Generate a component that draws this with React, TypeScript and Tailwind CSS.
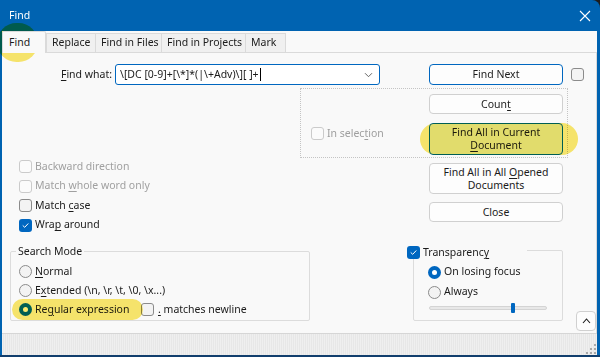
import type { ReactNode } from "react";

/* small win11-ish controls */

function U({ children }: { children: ReactNode }) {
  return <span className="underline decoration-1 underline-offset-[2px]">{children}</span>;
}

function Check({ checked = false, disabled = false }: { checked?: boolean; disabled?: boolean }) {
  if (checked) {
    return (
      <span className="flex h-[13px] w-[13px] shrink-0 items-center justify-center rounded-[3px] bg-[#0067c0]">
        <svg width="9" height="9" viewBox="0 0 9 9" fill="none">
          <path d="M2 4.7 3.7 6.3 7 2.8" stroke="white" strokeWidth="1" strokeLinecap="round" strokeLinejoin="round" />
        </svg>
      </span>
    );
  }
  return (
    <span
      className={
        disabled
          ? "block h-[13px] w-[13px] shrink-0 rounded-[3px] border border-[#cbcbcb] bg-[#fbfbfb]"
          : "block h-[13px] w-[13px] shrink-0 rounded-[3px] border border-[#8b8b8b] bg-[#f3f3f3]"
      }
    />
  );
}

function Radio({ checked = false }: { checked?: boolean }) {
  if (checked) {
    return (
      <span className="flex h-[13px] w-[13px] shrink-0 items-center justify-center rounded-full bg-[#0067c0]">
        <span className="h-[5px] w-[5px] rounded-full bg-white" />
      </span>
    );
  }
  return <span className="block h-[13px] w-[13px] shrink-0 rounded-full border border-[#8b8b8b] bg-[#f3f3f3]" />;
}

function Btn({ children, className = "" }: { children: ReactNode; className?: string }) {
  return (
    <div
      className={`relative flex w-[134px] items-center justify-center rounded-[4px] border text-center leading-[13px] ${className}`}
    >
      {children}
    </div>
  );
}

// highlighter pen strokes from the screenshot
function Marker({ className }: { className: string }) {
  return <span className={`pointer-events-none absolute rounded-full bg-[#fbe96e] mix-blend-multiply ${className}`} />;
}

export default function App() {
  return (
    <div className="relative h-[357px] w-[600px] overflow-hidden bg-[#1c1c1c] font-['Noto_Sans',sans-serif] text-[10.5px] text-[#1b1b1b]">
      <div className="flex h-full flex-col rounded-tr-[8px] border-b-2 border-[#113e6d] bg-[#0063b1] pl-[2px] pr-[3px]">
        {/* Title bar */}
        <div className="flex h-[31px] shrink-0 items-center justify-between pl-[7px] pr-[6px] text-white">
          <span>Find</span>
          <svg width="12" height="12" viewBox="0 0 12 12" fill="none">
            <path d="M1 1 11 11M11 1 1 11" stroke="white" strokeWidth="1.1" />
          </svg>
        </div>

        <div className="flex flex-1 flex-col bg-[#f9f9f9]">
          {/* Tabs */}
          <div className="flex h-[21px] shrink-0 items-end">
            <div className="relative z-10 -mb-px flex h-[22px] w-[44px] items-center rounded-t-[2px] border border-b-0 border-[#dadada] bg-[#f9f9f9] pl-[6px]">
              Find
            </div>
            <div className="flex h-[19px] w-[50px] items-center border border-b-0 border-[#dadada] bg-[#f0f0f0] pl-[5px]">
              Replace
            </div>
            <div className="flex h-[19px] w-[66px] items-center border border-b-0 border-l-0 border-[#dadada] bg-[#f0f0f0] pl-[5px]">
              Find in Files
            </div>
            <div className="flex h-[19px] w-[84px] items-center border border-b-0 border-l-0 border-[#dadada] bg-[#f0f0f0] pl-[5px]">
              Find in Projects
            </div>
            <div className="flex h-[19px] w-[40px] items-center border border-b-0 border-l-0 border-[#dadada] bg-[#f0f0f0] pl-[5px]">
              Mark
            </div>
          </div>

          {/* Panel */}
          <div className="flex flex-1 flex-col border-r border-t border-[#dadada]">
            {/* Find what row */}
            <div className="mt-[11px] flex h-[21px] items-center">
              <div className="w-[113px] pr-[3px] text-right">
                <U>F</U>ind what:
              </div>
              <div className="flex h-[21px] w-[265px] items-center justify-between rounded-[3px] border border-[#0067c0] bg-white pl-[4px] pr-[6px]">
                <span className="flex items-center">
                  {"\\[DC [0-9]+[\\*]*(|\\+Adv)\\][ ]+"}
                  <span className="ml-px h-[13px] w-px bg-black" />
                </span>
                <svg width="9" height="6" viewBox="0 0 9 6" fill="none">
                  <path d="M1 1.2 4.5 4.7 8 1.2" stroke="#555" strokeWidth="0.9" />
                </svg>
              </div>
              <Btn className="ml-[49px] h-[21px] border-[#0067c0] bg-[#fdfdfd]">Find Next</Btn>
              <span className="ml-[8px] flex">
                <Check />
              </span>
            </div>

            {/* In selection box */}
            <div className="ml-[298px] mt-[3px] flex h-[70px] w-[268px] border border-dotted border-[#c4c4c4]">
              <div className="flex w-[128px] items-start gap-[3px] pl-[10px] pt-[38px] text-[#9e9e9e]">
                <Check disabled />
                <span className="leading-[13px]">
                  In selec<U>t</U>ion
                </span>
              </div>
              <div className="flex flex-col gap-[9px] pt-[5px]">
                <Btn className="h-[20px] border-[#d0d0d0] bg-[#fdfdfd]">
                  Coun<U>t</U>
                </Btn>
                <Btn className="h-[32px] border-[#0067c0] bg-[#e5f1fb]">
                  <Marker className="-bottom-[1px] -left-[10px] -right-[16px] -top-[1px]" />
                  <span>
                    Find All in Current
                    <br />
                    <U>D</U>ocument
                  </span>
                </Btn>
              </div>
            </div>

            {/* Options + more buttons */}
            <div className="flex h-[86px]">
              <div className="flex w-[427px] flex-col gap-[6.5px] pl-[17px] pt-[2px]">
                <div className="flex h-[13px] items-center gap-[3px] text-[#a0a0a0]">
                  <Check disabled />
                  Backward direction
                </div>
                <div className="flex h-[13px] items-center gap-[3px] text-[#a0a0a0]">
                  <Check disabled />
                  <span>
                    Match <U>w</U>hole word only
                  </span>
                </div>
                <div className="flex h-[13px] items-center gap-[3px]">
                  <Check />
                  <span>
                    Match <U>c</U>ase
                  </span>
                </div>
                <div className="flex h-[13px] items-center gap-[3px]">
                  <Check checked />
                  <span>
                    Wra<U>p</U> around
                  </span>
                </div>
              </div>
              <div className="flex flex-col gap-[8px] pt-[5px]">
                <Btn className="h-[31px] border-[#d0d0d0] bg-[#fdfdfd]">
                  <span>
                    Find All in All <U>O</U>pened
                    <br />
                    Documents
                  </span>
                </Btn>
                <Btn className="h-[20px] border-[#d0d0d0] bg-[#fdfdfd]">Close</Btn>
              </div>
            </div>

            {/* Search mode / transparency */}
            <div className="flex items-start">
              <div className="ml-[8px] mt-[7px] flex h-[70px] w-[300px] flex-col rounded-[2px] border border-[#dcdcdc]">
                <div className="-mt-[8px] ml-[5px] w-fit bg-[#f9f9f9] px-[2px] leading-[14px]">Search Mode</div>
                <div className="mt-[4px] flex flex-col pl-[8px]">
                  <div className="flex h-[19px] items-center gap-[3px]">
                    <Radio />
                    <span>
                      <U>N</U>ormal
                    </span>
                  </div>
                  <div className="flex h-[19px] items-center gap-[3px]">
                    <Radio />
                    <span>
                      E<U>x</U>tended (\n, \r, \t, \0, \x...)
                    </span>
                  </div>
                  <div className="flex h-[19px] items-center">
                    <div className="relative flex w-[122px] items-center gap-[3px]">
                      <Marker className="-left-[7px] -top-[3px] bottom-[-3px] right-[-2px]" />
                      <Radio checked />
                      <span>
                        Re<U>g</U>ular expression
                      </span>
                    </div>
                    <div className="flex items-center gap-[4px]">
                      <Check />
                      <span>
                        <U>.</U> matches newline
                      </span>
                    </div>
                  </div>
                </div>
              </div>

              <div className="ml-[103px] mt-[6px] flex h-[71px] w-[150px] flex-col rounded-[2px] border border-[#dcdcdc]">
                <div className="-ml-[7px] -mt-[6px] flex w-fit items-center gap-[3px] bg-[#f9f9f9] pr-[38px] leading-[14px]">
                  <Check checked />
                  <span>
                    Transparenc<U>y</U>
                  </span>
                </div>
                <div className="mt-[3px] flex flex-col pl-[14px]">
                  <div className="flex h-[20px] items-center gap-[3px]">
                    <Radio checked />
                    On losing focus
                  </div>
                  <div className="flex h-[20px] items-center gap-[3px]">
                    <Radio />
                    Always
                  </div>
                  <div className="relative ml-px mt-px flex h-[10px] w-[118px] items-center">
                    <div className="h-[4px] w-full rounded-full border border-[#d4d4d4] bg-[#e8e8e8]" />
                    <div className="absolute left-[82px] top-0 h-[10px] w-[4px] rounded-[1px] bg-[#0067c0]" />
                  </div>
                </div>
              </div>

              <div className="ml-[13px] mt-[67px] flex h-[20px] w-[20px] items-center justify-center rounded-[4px] border border-[#d0d0d0] bg-[#fdfdfd]">
                <svg width="9" height="6" viewBox="0 0 9 6" fill="none">
                  <path d="M1 5 4.5 1 8 5" stroke="#1b1b1b" strokeWidth="1.1" />
                </svg>
              </div>
            </div>
          </div>

          {/* Status bar */}
          <div className="flex h-[22px] shrink-0 items-end justify-end border-t border-[#d6d6d6] bg-[repeating-linear-gradient(90deg,#efefef_0px,#efefef_1px,#e7e7e7_1px,#e7e7e7_2px)] pb-[1px] pr-[1px]">
            <svg width="10" height="10" viewBox="0 0 10 10" fill="#a8a8a8">
              <rect x="8" y="0" width="2" height="2" />
              <rect x="4" y="4" width="2" height="2" />
              <rect x="8" y="4" width="2" height="2" />
              <rect x="0" y="8" width="2" height="2" />
              <rect x="4" y="8" width="2" height="2" />
              <rect x="8" y="8" width="2" height="2" />
            </svg>
          </div>
        </div>
      </div>

      {/* highlighter over the active tab */}
      <Marker className="left-[-3px] top-[23px] h-[39px] w-[41px]" />
    </div>
  );
}
